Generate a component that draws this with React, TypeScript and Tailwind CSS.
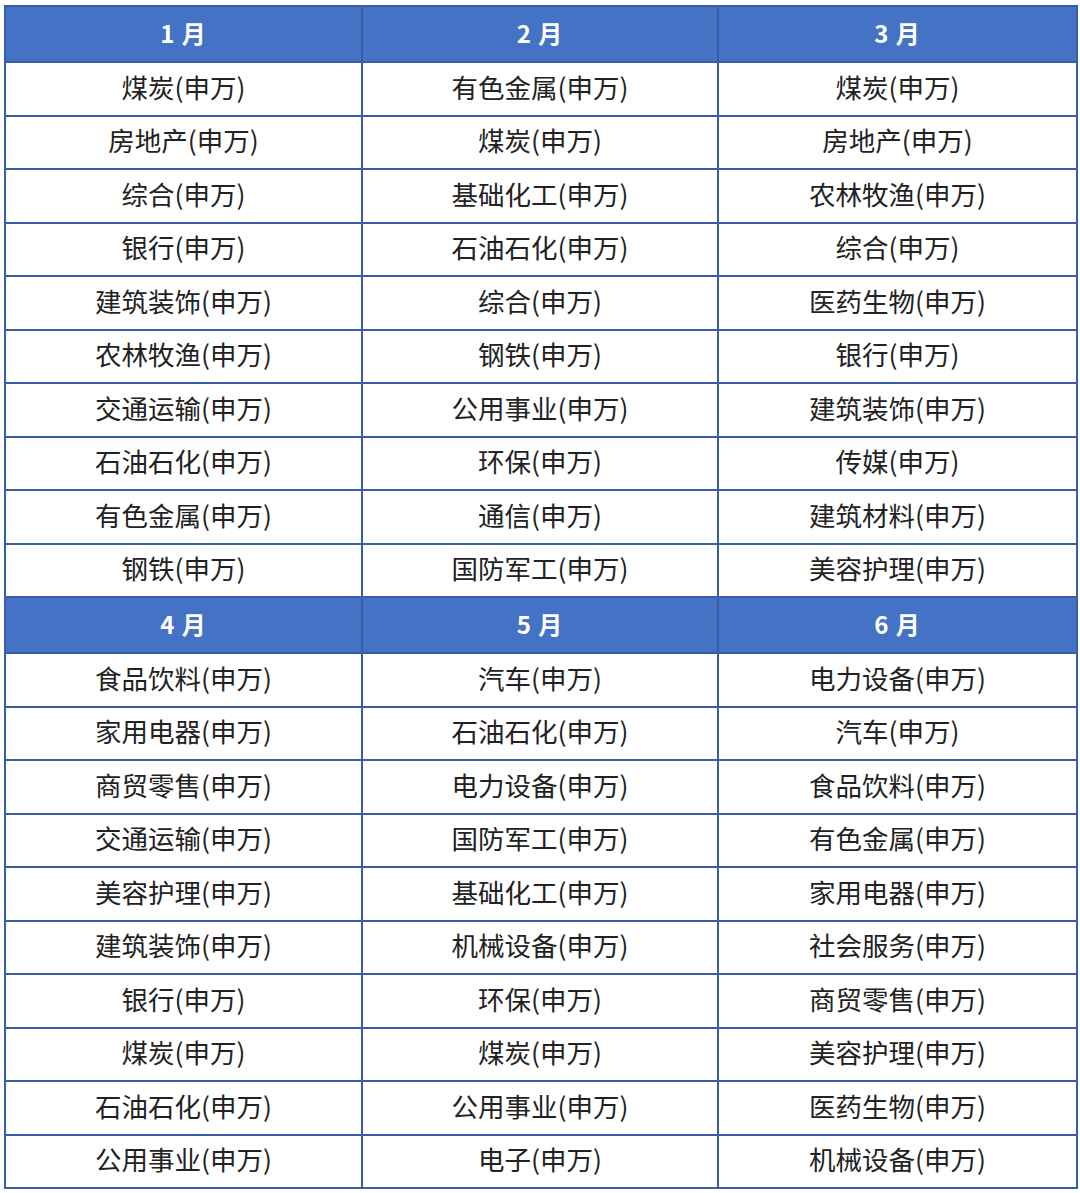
const first = {
  months: ['1 月', '2 月', '3 月'],
  rows: [
    ['煤炭(申万)', '有色金属(申万)', '煤炭(申万)'],
    ['房地产(申万)', '煤炭(申万)', '房地产(申万)'],
    ['综合(申万)', '基础化工(申万)', '农林牧渔(申万)'],
    ['银行(申万)', '石油石化(申万)', '综合(申万)'],
    ['建筑装饰(申万)', '综合(申万)', '医药生物(申万)'],
    ['农林牧渔(申万)', '钢铁(申万)', '银行(申万)'],
    ['交通运输(申万)', '公用事业(申万)', '建筑装饰(申万)'],
    ['石油石化(申万)', '环保(申万)', '传媒(申万)'],
    ['有色金属(申万)', '通信(申万)', '建筑材料(申万)'],
    ['钢铁(申万)', '国防军工(申万)', '美容护理(申万)'],
  ],
}

const second = {
  months: ['4 月', '5 月', '6 月'],
  rows: [
    ['食品饮料(申万)', '汽车(申万)', '电力设备(申万)'],
    ['家用电器(申万)', '石油石化(申万)', '汽车(申万)'],
    ['商贸零售(申万)', '电力设备(申万)', '食品饮料(申万)'],
    ['交通运输(申万)', '国防军工(申万)', '有色金属(申万)'],
    ['美容护理(申万)', '基础化工(申万)', '家用电器(申万)'],
    ['建筑装饰(申万)', '机械设备(申万)', '社会服务(申万)'],
    ['银行(申万)', '环保(申万)', '商贸零售(申万)'],
    ['煤炭(申万)', '煤炭(申万)', '美容护理(申万)'],
    ['石油石化(申万)', '公用事业(申万)', '医药生物(申万)'],
    ['公用事业(申万)', '电子(申万)', '机械设备(申万)'],
  ],
}

const font = { fontFamily: '"Noto Sans CJK SC", "Noto Sans", sans-serif' }

export default function App() {
  return (
    <div className="w-[1080px] h-[1193px] bg-white pt-[5px] pl-[4px]" style={font}>
      <table className="w-[1072px] table-fixed border-collapse border-2 border-[#3a5ea6]">
        <colgroup>
          <col className="w-[357px]" />
          <col className="w-[356px]" />
          <col className="w-[359px]" />
        </colgroup>
        <tbody>
          {[first, second].map((block, bi) => (
            <>
              <tr key={`h${bi}`} className="h-[56px] bg-[#4472c4]">
                {block.months.map((m) => (
                  <th key={m} className="border-2 border-[#3a5ea6] text-white text-[24px] font-bold tracking-[1px] text-center">
                    <span className="relative -top-[1px]">{m}</span>
                  </th>
                ))}
              </tr>
              {block.rows.map((r, i) => (
                <tr key={`r${bi}-${i}`} className="h-[53.5px]">
                  {r.map((c, j) => (
                    <td key={j} className="border-2 border-[#3a5ea6] text-[#222] text-[26.5px] text-center leading-none">
                      <span className="relative -top-[2px]">{c}</span>
                    </td>
                  ))}
                </tr>
              ))}
            </>
          ))}
        </tbody>
      </table>
    </div>
  )
}
